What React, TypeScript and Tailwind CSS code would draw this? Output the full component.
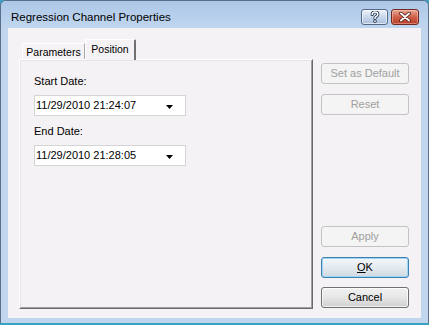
import React from "react";

const font = { fontFamily: '"Liberation Sans", Arial, sans-serif' };

function DateBox({ value }: { value: string }) {
  return (
    <div className="mt-[7px] flex h-[21px] w-[152px] items-center border border-[#d4d4d4] bg-white pl-[1px]">
      <span className="text-[11px] leading-[13px] text-black">{value}</span>
      <svg className="ml-auto mr-[12px] mt-[2px]" width="7" height="4" viewBox="0 0 7 4">
        <polygon points="0,0 7,0 3.5,4" fill="#000" />
      </svg>
    </div>
  );
}

function DisabledButton({ label, className = "" }: { label: string; className?: string }) {
  return (
    <div
      className={`flex h-[21px] w-[88px] items-center justify-center rounded-[3px] border border-[#c3c3c3] bg-[#f4f4f4] text-[11px] leading-[13px] text-[#a0a0a0] ${className}`}
    >
      {label}
    </div>
  );
}

export default function App() {
  return (
    <div className="flex h-[325px] w-[429px] flex-col overflow-hidden bg-[#3aa0c4]" style={font}>
      <div className="flex h-[323px] flex-col rounded-t-[6px] border border-b-0 border-[#5b6f88] bg-[#c0d6ef]">
        {/* Title bar */}
        <div className="flex h-[27px] items-start rounded-t-[5px] bg-gradient-to-b from-[#adc7e6] to-[#c0d6ef]">
          <div className="pl-[10px] pt-[9px] text-[11.5px] leading-[14px] text-black">
            Regression Channel Properties
          </div>
          <div className="ml-auto flex gap-[3px] pr-[9px] pt-[8px]">
            <div className="flex h-[16px] w-[27px] items-center justify-center rounded-[3px] border border-[#53698a] bg-gradient-to-b from-[#eef3fa] via-[#c9d8ec] to-[#a9bfdc] shadow-[inset_0_0_0_1px_rgba(255,255,255,0.6)]">
              <svg width="10" height="12" viewBox="0 0 10 12">
                <path
                  d="M2.2 3.6 C2.2 1.6 3.5 1 5 1 C6.7 1 7.8 2 7.8 3.4 C7.8 4.8 6.4 5.2 5.4 6.1 C5.1 6.4 5 6.8 5 7.4"
                  fill="none"
                  stroke="#2b3a55"
                  strokeWidth="3.2"
                  strokeLinecap="round"
                />
                <circle cx="5" cy="10.2" r="1.7" fill="#2b3a55" />
                <path
                  d="M2.2 3.6 C2.2 1.6 3.5 1 5 1 C6.7 1 7.8 2 7.8 3.4 C7.8 4.8 6.4 5.2 5.4 6.1 C5.1 6.4 5 6.8 5 7.4"
                  fill="none"
                  stroke="#ffffff"
                  strokeWidth="1.5"
                  strokeLinecap="round"
                />
                <circle cx="5" cy="10.2" r="0.9" fill="#ffffff" />
              </svg>
            </div>
            <div className="flex h-[16px] w-[28px] items-center justify-center rounded-[3px] border border-[#6e2a1f] bg-gradient-to-b from-[#e9a896] via-[#cf6048] to-[#b83c25] shadow-[inset_0_0_0_1px_rgba(255,210,200,0.45)]">
              <svg width="12" height="10" viewBox="0 0 12 10">
                <path d="M2 1.5 L10 8.5 M10 1.5 L2 8.5" stroke="#4a1a12" strokeWidth="3.6" strokeLinecap="round" />
                <path d="M2 1.5 L10 8.5 M10 1.5 L2 8.5" stroke="#ffffff" strokeWidth="1.9" strokeLinecap="round" />
              </svg>
            </div>
          </div>
        </div>

        {/* Client */}
        <div className="mx-[7px] flex h-[290px] bg-[#f5f2f5] pl-[11px] pt-[11px]">
          {/* Tabs column */}
          <div className="flex w-[294px] flex-col">
            <div className="flex h-[20px] items-end pl-[3px]">
              <div className="flex h-[16px] w-[63px] justify-center rounded-tl-[2px] border-l border-r border-t border-l-white border-r-[#a8a8a8] border-t-white pt-[2px] text-[10.5px] leading-[13px] text-black">
                Parameters
              </div>
              <div className="relative z-10 -mb-[1px] flex h-[21px] w-[51px] justify-center rounded-t-[2px] border-l border-r-2 border-t border-l-white border-r-[#707070] border-t-white bg-[#f5f2f5] pt-[3px] text-[10.5px] leading-[13px] text-black">
                Position
              </div>
            </div>
            <div className="h-[250px] border border-b-[#696969] border-l-white border-r-[#696969] border-t-white">
              <div className="h-full border border-b-[#a0a0a0] border-l-[#e6e3e6] border-r-[#a0a0a0] border-t-[#e6e3e6] pl-[13px] pt-[14px]">
                <div className="text-[11px] leading-[13px] text-black">Start Date:</div>
                <DateBox value="11/29/2010 21:24:07" />
                <div className="mt-[9px] text-[11px] leading-[13px] text-black">End Date:</div>
                <DateBox value="11/29/2010 21:28:05" />
              </div>
            </div>
          </div>

          {/* Buttons column */}
          <div className="ml-[8px] flex w-[88px] flex-col">
            <DisabledButton label="Set as Default" className="mt-[24px]" />
            <DisabledButton label="Reset" className="mt-[10px]" />
            <DisabledButton label="Apply" className="mt-[111px]" />
            <div className="mt-[10px] flex h-[21px] w-[88px] items-center justify-center rounded-[3px] border border-[#3c7fb1] bg-gradient-to-b from-[#f2f6f9] via-[#e4ebf0] to-[#cfd9e0] text-[11px] leading-[13px] text-black shadow-[inset_0_0_0_1px_#9fd5f2]">
              <span className="underline decoration-1 underline-offset-[1px]">O</span>K
            </div>
            <div className="mt-[9px] flex h-[21px] w-[88px] items-center justify-center rounded-[3px] border border-[#707070] bg-gradient-to-b from-[#f2f2f2] via-[#e6e6e6] to-[#d0d0d0] text-[11px] leading-[13px] text-black shadow-[inset_0_0_0_1px_rgba(255,255,255,0.7)]">
              Cancel
            </div>
          </div>
        </div>
      </div>
    </div>
  );
}
